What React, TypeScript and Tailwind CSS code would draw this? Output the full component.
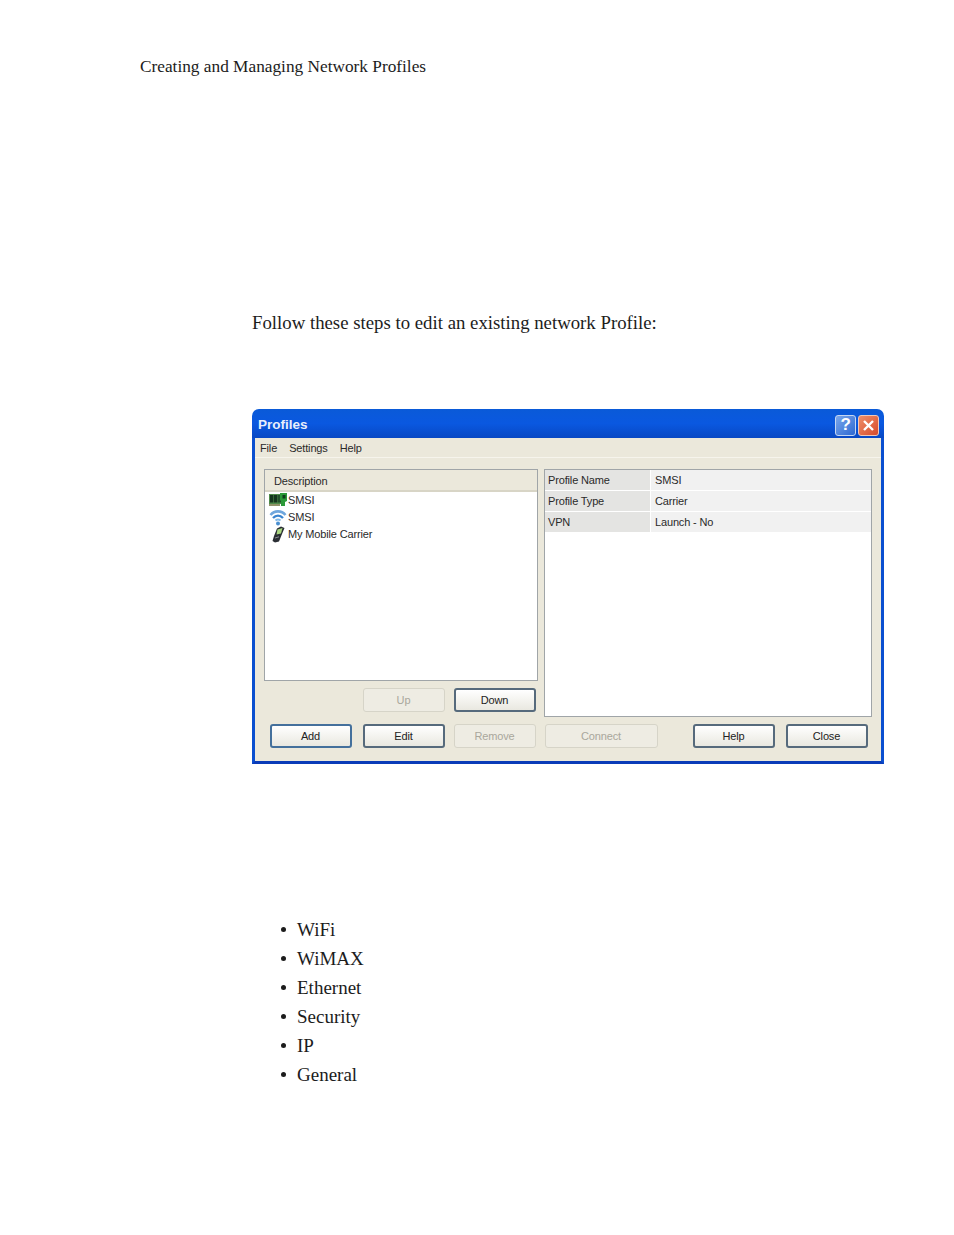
const serif = "font-['Liberation_Serif',serif] text-[#1c1c1c] leading-[29px]";

const bullets = ['WiFi', 'WiMAX', 'Ethernet', 'Security', 'IP', 'General'];

const rows = [
  { label: 'Profile Name', value: 'SMSI' },
  { label: 'Profile Type', value: 'Carrier' },
  { label: 'VPN', value: 'Launch - No' }
];

const NetworkCardIcon = () => (
  <svg width="19" height="15" viewBox="0 0 19 15" className="shrink-0">
    <rect x="0" y="1" width="13" height="10" fill="#4f8a4a" />
    <rect x="1" y="2" width="3.4" height="7.5" fill="#16351f" />
    <rect x="5" y="2" width="3.4" height="7.5" fill="#16351f" />
    <rect x="9" y="2" width="3.4" height="7.5" fill="#24512c" />
    <path d="M11 0h7v8l-2 1v4h-4V8l-1-1z" fill="#2c9a38" />
    <rect x="13.5" y="2" width="3" height="3.5" fill="#0f3d1a" />
    <rect x="0" y="11" width="11" height="2" fill="#8f9268" />
  </svg>
);

const WifiIcon = () => (
  <svg width="19" height="17" viewBox="0 0 19 17" className="shrink-0">
    <path d="M1.5 6C5.5 1.2 12.5 1.2 16.5 6" fill="none" stroke="#6fa6dc" strokeWidth="2.6" />
    <path d="M4 9C7 6 11 6 14 9" fill="none" stroke="#3a84cf" strokeWidth="2.4" />
    <path d="M6.5 11.5C8 10.4 10 10.4 11.5 11.5" fill="none" stroke="#7fb8e8" strokeWidth="2" />
    <circle cx="9" cy="14.6" r="2" fill="#4a8fd0" />
  </svg>
);

const PhoneIcon = () => (
  <svg width="19" height="17" viewBox="0 0 19 17" className="shrink-0">
    <path d="M8 2.5 12 0.5 15.5 2 13 8 10 15.5 6 16.5 3.5 15 5 10z" fill="#2a2e33" />
    <path d="M8.5 3.5 13.5 2 12 7.5 7.5 8.5z" fill="#a9d680" />
    <path d="M6 12 10 10.8" stroke="#8a9095" strokeWidth="1" />
  </svg>
);

const Button = ({ label, disabled, primary, className }: { label: string; disabled?: boolean; primary?: boolean; className: string }) => (
  <div
    className={`${className} h-[24px] pt-px pr-px flex items-center justify-center rounded-[3px] ${
      disabled
        ? 'border border-[#d6d4c8] bg-[#eeece3] text-[#a9a79c]'
        : primary
          ? 'border-2 border-[#44709c] bg-gradient-to-b from-white to-[#e9e8e0] text-[#222]'
          : 'border-2 border-[#566a7c] bg-gradient-to-b from-white to-[#e9e8e0] text-[#222]'
    }`}
  >
    {label}
  </div>
);

const App = () => {
  return (
    <div className="w-[954px] h-[1235px] bg-white overflow-hidden">
      <p className={`${serif} text-[17.3px] pl-[140px] pt-[52px]`}>Creating and Managing Network Profiles</p>
      <p className={`${serif} text-[18.8px] pl-[252px] mt-[227px]`}>Follow these steps to edit an existing network Profile:</p>

      <div className="ml-[252px] mt-[72px] w-[632px] h-[355px] flex flex-col font-['Liberation_Sans',sans-serif] text-[11px] tracking-[-0.15px] text-[#2a2a2a]">
        <div className="h-[29px] shrink-0 flex items-center justify-between pl-[6px] pr-[5px] pt-[3px] rounded-t-[7px] bg-gradient-to-b from-[#0a5ad8] via-[#0a58e0] to-[#0848c4]">
          <span className="mt-px text-[#e8eefc] font-bold text-[13.5px] tracking-normal">Profiles</span>
          <div className="flex gap-[2px]">
            <div className="w-[21px] h-[21px] rounded-[3px] border border-[#c4d6f2] bg-gradient-to-br from-[#7aa6ea] to-[#2d68d2] text-white font-bold text-[17px] flex items-center justify-center">?</div>
            <div className="w-[21px] h-[21px] rounded-[3px] border border-[#f0c8b8] bg-gradient-to-br from-[#ee8f6a] to-[#d6492a] flex items-center justify-center">
              <svg width="13" height="13" viewBox="0 0 13 13">
                <path d="M2 2 11 11M11 2 2 11" stroke="#fff" strokeWidth="2.4" />
              </svg>
            </div>
          </div>
        </div>

        <div className="flex-1 flex flex-col border-x-[3px] border-b-[3px] border-x-[#0a4fd0] border-b-[#0a3cb8] bg-[#ebe8db]">
          <div className="h-[20px] shrink-0 flex items-center gap-[12px] pl-[5px] pt-px border-b border-[#f6f4ec]">
            <span>File</span>
            <span>Settings</span>
            <span>Help</span>
          </div>

          <div className="flex gap-[6px] pl-[9px] pr-[9px] pt-[11px]">
            <div className="w-[274px] flex flex-col">
              <div className="h-[212px] bg-white border border-[#a0a5a8] flex flex-col">
                <div className="h-[22px] shrink-0 pl-[9px] pt-[2px] flex items-center bg-[#ebe8db] border-b-2 border-[#d8d5c6]">Description</div>
                <div className="pl-[4px] flex flex-col">
                  <div className="h-[17px] flex items-center">
                    <NetworkCardIcon />
                    <span>SMSI</span>
                  </div>
                  <div className="h-[17px] flex items-center">
                    <WifiIcon />
                    <span>SMSI</span>
                  </div>
                  <div className="h-[17px] flex items-center">
                    <PhoneIcon />
                    <span>My Mobile Carrier</span>
                  </div>
                </div>
              </div>
              <div className="mt-[7px] flex justify-end gap-[9px] pr-[2px]">
                <Button label="Up" disabled className="w-[82px]" />
                <Button label="Down" className="w-[82px]" />
              </div>
            </div>

            <div className="w-[328px] h-[248px] bg-white border border-[#a0a5a8] flex flex-col gap-px">
              {rows.map(row => (
                <div key={row.label} className="flex h-[20px]">
                  <div className="w-[105px] pl-[3px] flex items-center bg-[#e4e4e2]">{row.label}</div>
                  <div className="flex-1 ml-px pl-[4px] flex items-center bg-[#f1f1f1]">{row.value}</div>
                </div>
              ))}
            </div>
          </div>

          <div className="mt-[7px] flex pl-[15px]">
            <Button label="Add" primary className="w-[82px]" />
            <Button label="Edit" className="w-[82px] ml-[11px]" />
            <Button label="Remove" disabled className="w-[82px] ml-[9px]" />
            <Button label="Connect" disabled className="w-[113px] ml-[9px]" />
            <Button label="Help" className="w-[82px] ml-[35px]" />
            <Button label="Close" className="w-[82px] ml-[11px]" />
          </div>
        </div>
      </div>

      <ul className={`${serif} text-[19px] pl-[281px] mt-[151px]`}>
        {bullets.map(item => (
          <li key={item} className="flex items-center h-[29px]">
            <span className="w-[5px] h-[5px] rounded-full bg-[#1c1c1c] mr-[11px]" />
            {item}
          </li>
        ))}
      </ul>
    </div>
  );
};

export default App;
